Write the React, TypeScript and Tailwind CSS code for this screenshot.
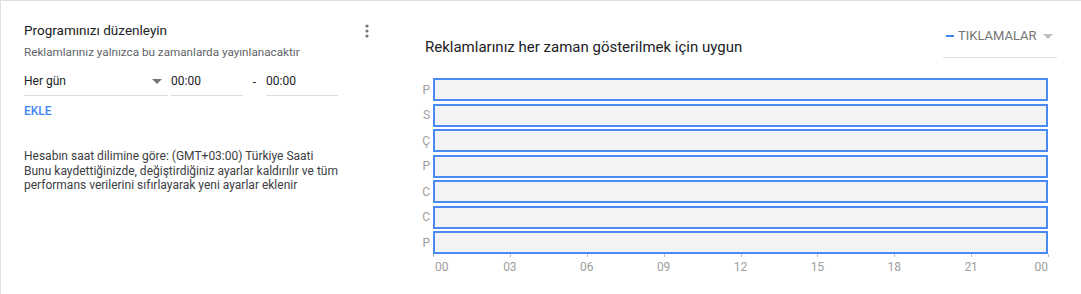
const days = ['P', 'S', 'Ç', 'P', 'C', 'C', 'P']
const hours = ['00', '03', '06', '09', '12', '15', '18', '21', '00']

function KebabIcon() {
  return (
    <svg width="4" height="14" viewBox="0 0 4 14" className="fill-[#757575]">
      <circle cx="2" cy="2" r="1.6" />
      <circle cx="2" cy="7" r="1.6" />
      <circle cx="2" cy="12" r="1.6" />
    </svg>
  )
}

function Caret({ className }: { className?: string }) {
  return (
    <svg width="10" height="5" viewBox="0 0 10 5" className={className}>
      <path d="M0 0h10L5 5z" />
    </svg>
  )
}

function ScheduleEditor() {
  return (
    <div className="w-[414px] shrink-0 pl-[23px] pt-[19px] text-[#202124]">
      <div className="flex w-[345px] items-start justify-between">
        <h2 className="text-[13.5px] leading-[20px]">Programınızı düzenleyin</h2>
        <div className="mt-[4px]">
          <KebabIcon />
        </div>
      </div>
      <p className="mt-[4px] text-[11.7px] leading-[16px] text-[#5f6368]">
        Reklamlarınız yalnızca bu zamanlarda yayınlanacaktır
      </p>

      <div className="mt-[7px] flex h-[29px] items-stretch text-[12px] text-[#202124]">
        <div className="flex w-[144px] items-center justify-between border-b border-[#dcdcdc] pr-[6px]">
          <span>Her gün</span>
          <Caret className="fill-[#757575]" />
        </div>
        <div className="ml-[3px] flex w-[72px] items-center border-b border-[#dcdcdc]">00:00</div>
        <div className="flex w-[23px] items-center justify-center">-</div>
        <div className="flex w-[72px] items-center border-b border-[#dcdcdc]">00:00</div>
      </div>

      <button className="mt-[7px] block text-[12px] leading-[16px] font-medium text-[#4285f4]">EKLE</button>

      <div className="mt-[30px] text-[12px] leading-[14.5px] text-[#3c4043]">
        <p>Hesabın saat dilimine göre: (GMT+03:00) Türkiye Saati</p>
        <p>
          Bunu kaydettiğinizde, değiştirdiğiniz ayarlar kaldırılır ve tüm
          <br />
          performans verilerini sıfırlayarak yeni ayarlar eklenir
        </p>
      </div>
    </div>
  )
}

function AvailabilityChart() {
  return (
    <div className="flex-1 pt-[21px]">
      <div className="flex items-start justify-between pr-[24px]">
        <h3 className="mt-[15px] ml-[10px] text-[15px] leading-[20px] text-[#202124]">
          Reklamlarınız her zaman gösterilmek için uygun
        </h3>
        <div className="flex h-[36px] w-[114px] items-start border-b border-[#e0e0e0] pt-[6px] pl-[3px]">
          <span className="mt-[7px] h-[2px] w-[8px] bg-[#4285f4]" />
          <span className="ml-[4px] text-[13px] leading-[16px] text-[#757575]">TIKLAMALAR</span>
          <Caret className="mt-[6px] ml-[6px] fill-[#bdbdbd]" />
        </div>
      </div>

      <div className="mt-[20px] mr-[33px] flex flex-col gap-[2.5px]">
        {days.map((d, i) => (
          <div key={i} className="flex h-[23px] items-center">
            <span className="w-[18px] pr-[3px] text-right text-[12px] text-[#9e9e9e]">{d}</span>
            <div className="h-full flex-1 border-2 border-[#4a8af4] bg-[#f3f3f3]" />
          </div>
        ))}
      </div>

      <div className="relative mr-[33px] ml-[18px] h-[24px] border-t border-transparent">
        {hours.map((h, i) => {
          const pct = (i / 8) * 100
          const align = i === 0 ? 'translate-x-0' : i === 8 ? '-translate-x-full' : '-translate-x-1/2'
          return (
            <div key={i}>
              <span className="absolute top-[-1px] h-[3px] w-px bg-[#bdbdbd]" style={{ left: `${pct}%` }} />
              <span
                className={`absolute top-[4px] text-[12px] leading-[16px] text-[#9e9e9e] ${align}`}
                style={{ left: i === 0 ? `calc(${pct}% + 2px)` : `${pct}%` }}
              >
                {h}
              </span>
            </div>
          )
        })}
      </div>
    </div>
  )
}

export default function App() {
  return (
    <div className="h-[294px] w-[1081px] overflow-hidden bg-white font-['Roboto','Liberation_Sans',sans-serif]">
      <div className="flex h-full border-t border-l border-[#e0e0e0]">
        <ScheduleEditor />
        <AvailabilityChart />
      </div>
    </div>
  )
}
